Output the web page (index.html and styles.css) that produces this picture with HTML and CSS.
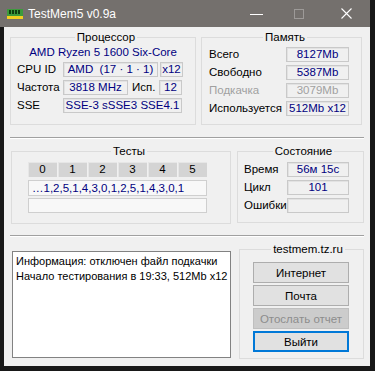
FILE: index.html
```html
<!DOCTYPE html>
<html lang="ru">
<head>
  <meta charset="UTF-8">
  <title>TestMem5 v0.9a</title>
  <link rel="stylesheet" href="styles.css">
</head>
<body>

  <div class="window">
    <div class="titlebar">
      <svg class="app-icon" width="16" height="10" viewBox="0 0 16 10">
        <rect x="0" y="0" width="16" height="7" fill="#3c9a3c"/>
        <rect x="2" y="1" width="2" height="4" fill="#0f3f0f"/>
        <rect x="5" y="1" width="2" height="4" fill="#0f3f0f"/>
        <rect x="8" y="1" width="2" height="4" fill="#0f3f0f"/>
        <rect x="11" y="1" width="2" height="4" fill="#0f3f0f"/>
        <rect x="0" y="7" width="16" height="3" fill="#f0d020"/>
      </svg>
      <span class="title">TestMem5 v0.9a</span>
      <div class="controls">
        <span class="ctl ctl-min"></span>
        <span class="ctl ctl-max"></span>
        <svg class="ctl-close" width="11" height="11" viewBox="0 0 11 11">
          <path d="M0.5 0.5 L10.5 10.5 M10.5 0.5 L0.5 10.5" stroke="#fff" stroke-width="1.1"/>
        </svg>
      </div>
    </div>

    <div class="client">

      <div class="top-row">
        <fieldset class="group cpu">
          <legend>Процессор</legend>
          <div class="cpu-name">AMD Ryzen 5 1600 Six-Core</div>
          <div class="row">
            <span class="label w46">CPU ID</span>
            <span class="field w95">AMD&nbsp; (17 · 1 · 1)</span>
            <span class="field w23 ml2">x12</span>
          </div>
          <div class="row">
            <span class="label w46">Частота</span>
            <span class="field w65">3818 MHz</span>
            <span class="label isp">Исп.</span>
            <span class="field w23">12</span>
          </div>
          <div class="row">
            <span class="label w46">SSE</span>
            <span class="field w119">SSE-3 sSSE3 SSE4.1</span>
          </div>
        </fieldset>

        <fieldset class="group mem">
          <legend>Память</legend>
          <div class="row">
            <span class="label w77">Всего</span>
            <span class="field w63">8127Mb</span>
          </div>
          <div class="row">
            <span class="label w77">Свободно</span>
            <span class="field w63">5387Mb</span>
          </div>
          <div class="row disabled">
            <span class="label w77">Подкачка</span>
            <span class="field w63">3079Mb</span>
          </div>
          <div class="row">
            <span class="label w77">Используется</span>
            <span class="field w63">512Mb x12</span>
          </div>
        </fieldset>
      </div>

      <div class="separator"></div>

      <div class="mid-row">
        <fieldset class="group tests">
          <legend>Тесты</legend>
          <div class="test-head">
            <span>0</span><span>1</span><span>2</span><span>3</span><span>4</span><span>5</span>
          </div>
          <div class="seq">…1,2,5,1,4,3,0,1,2,5,1,4,3,0,1</div>
          <div class="seq empty"></div>
        </fieldset>

        <fieldset class="group state">
          <legend>Состояние</legend>
          <div class="row">
            <span class="label w43">Время</span>
            <span class="field w62">56м 15с</span>
          </div>
          <div class="row">
            <span class="label w43">Цикл</span>
            <span class="field w62">101</span>
          </div>
          <div class="row">
            <span class="label w43">Ошибки</span>
            <span class="field w62"></span>
          </div>
        </fieldset>
      </div>

      <div class="separator sep2"></div>

      <div class="bottom-row">
        <div class="log">
          Информация: отключен файл подкачки<br>
          Начало тестирования в 19:33, 512Mb x12
        </div>

        <fieldset class="group links">
          <legend>testmem.tz.ru</legend>
          <button class="btn">Интернет</button>
          <button class="btn">Почта</button>
          <button class="btn" disabled>Отослать отчет</button>
          <button class="btn default">Выйти</button>
        </fieldset>
      </div>

    </div>
  </div>

</body>
</html>
```

FILE: styles.css
```css
body {
  margin: 0;
  background-color: #181818;
  font-family: "Liberation Sans", Arial, sans-serif;
  font-size: 11.5px;
  color: #000;
}

.window {
  width: 370px;
}

/* title bar */
.titlebar {
  height: 27px;
  background-color: #74706d;
  display: flex;
  align-items: center;
  color: #fff;
}

.app-icon {
  margin-left: 7px;
  margin-top: 1px;
}

.title {
  margin-left: 5px;
  font-size: 12px;
}

.controls {
  margin-left: auto;
  display: flex;
  align-items: center;
  height: 27px;
}

.ctl-min {
  width: 13px;
  height: 1px;
  background: #fff;
  margin-right: 31px;
  margin-top: 2px;
}

.ctl-max {
  width: 8px;
  height: 8px;
  border: 1px solid #9d9a98;
  margin-right: 37px;
}

.ctl-close {
  margin-right: 18px;
}

/* client area */
.client {
  margin-left: 4px;
  height: 339px;
  background-color: #f0f0f0;
  padding: 2px 0 0 6px;
  box-sizing: border-box;
}

.group {
  margin: 0;
  padding: 0;
  border: 1px solid #dcdcdc;
  box-sizing: border-box;
  min-width: 0;
}

.group legend {
  margin: 0 auto;
  padding: 0 2px;
  line-height: 16px;
  height: 16px;
}

.top-row {
  display: flex;
  gap: 5px;
}

.row {
  display: flex;
  align-items: center;
  height: 15px;
  margin-top: 3px;
}

.label {
  line-height: 15px;
  white-space: nowrap;
}

.field {
  height: 15px;
  line-height: 13px;
  box-sizing: border-box;
  border: 1px solid #c9c9c9;
  box-shadow: inset 1px 1px 0 #e2e2e2;
  color: #000080;
  text-align: center;
  white-space: nowrap;
  overflow: hidden;
}

.w23 { width: 23px; }
.w43 { width: 43px; }
.w46 { width: 46px; }
.w62 { width: 62px; }
.w63 { width: 63px; }
.w65 { width: 65px; }
.w77 { width: 77px; }
.w95 { width: 95px; }
.w119 { width: 119px; }
.ml2 { margin-left: 2px; }

.isp {
  width: 31px;
  padding-left: 4px;
  box-sizing: border-box;
}

.cpu {
  width: 186px;
  height: 96px;
  padding-left: 6px;
}

.cpu-name {
  color: #000080;
  text-align: center;
  line-height: 14px;
  margin-left: -6px;
}

.cpu .row:first-of-type {
  margin-top: 6px;
}

.mem {
  width: 161px;
  height: 96px;
  padding-left: 7px;
}

.mem .row:first-of-type {
  margin-top: 2px;
}

.disabled .label,
.disabled .field {
  color: #a0a0a0;
}

.separator {
  width: 354px;
  height: 1px;
  background: #a0a0a0;
  border-bottom: 1px solid #fff;
  margin-top: 12px;
}

.sep2 {
  margin-top: 11px;
}

/* tests */
.mid-row {
  display: flex;
  gap: 6px;
  margin-top: 4px;
  margin-left: 1px;
}

.tests {
  width: 220px;
  height: 81px;
  padding-left: 16px;
}

.test-head {
  display: flex;
  gap: 1px;
  margin-top: 3px;
}

.test-head span {
  width: 29px;
  height: 15px;
  line-height: 15px;
  text-align: center;
  background-color: #d4d4d4;
  box-shadow: inset 1px 1px 0 #e6e6e6;
}

.seq {
  width: 179px;
  height: 16px;
  line-height: 14px;
  margin-top: 3px;
  box-sizing: border-box;
  border: 1px solid #cfcfcf;
  background: #f8f8f8;
  color: #000080;
  padding-left: 3px;
  white-space: nowrap;
  overflow: hidden;
}

.seq.empty {
  height: 15px;
  margin-top: 2px;
}

.state {
  width: 127px;
  height: 80px;
  padding-left: 6px;
}

/* bottom */
.bottom-row {
  display: flex;
  align-items: flex-start;
  gap: 8px;
}

.log {
  width: 219px;
  height: 107px;
  margin-top: 14px;
  margin-left: 2px;
  box-sizing: border-box;
  background: #fff;
  border: 1px solid #828282;
  padding: 2px 3px;
  font-size: 11px;
  line-height: 15px;
  white-space: nowrap;
  overflow: hidden;
}

.links {
  width: 125px;
  height: 118px;
  margin-top: 4px;
  padding-left: 13px;
  display: flex;
  flex-direction: column;
}

.btn {
  width: 96px;
  height: 21px;
  margin-top: 2px;
  padding: 0;
  font-family: inherit;
  font-size: 11.5px;
  color: #000;
  background-color: #e1e1e1;
  border: 1px solid #adadad;
  box-sizing: border-box;
}

.btn:first-of-type {
  margin-top: 5px;
}

.btn:disabled {
  background-color: #cccccc;
  border-color: #bfbfbf;
  color: #8c8c8c;
}

.btn.default {
  border: 2px solid #0078d7;
}
```
